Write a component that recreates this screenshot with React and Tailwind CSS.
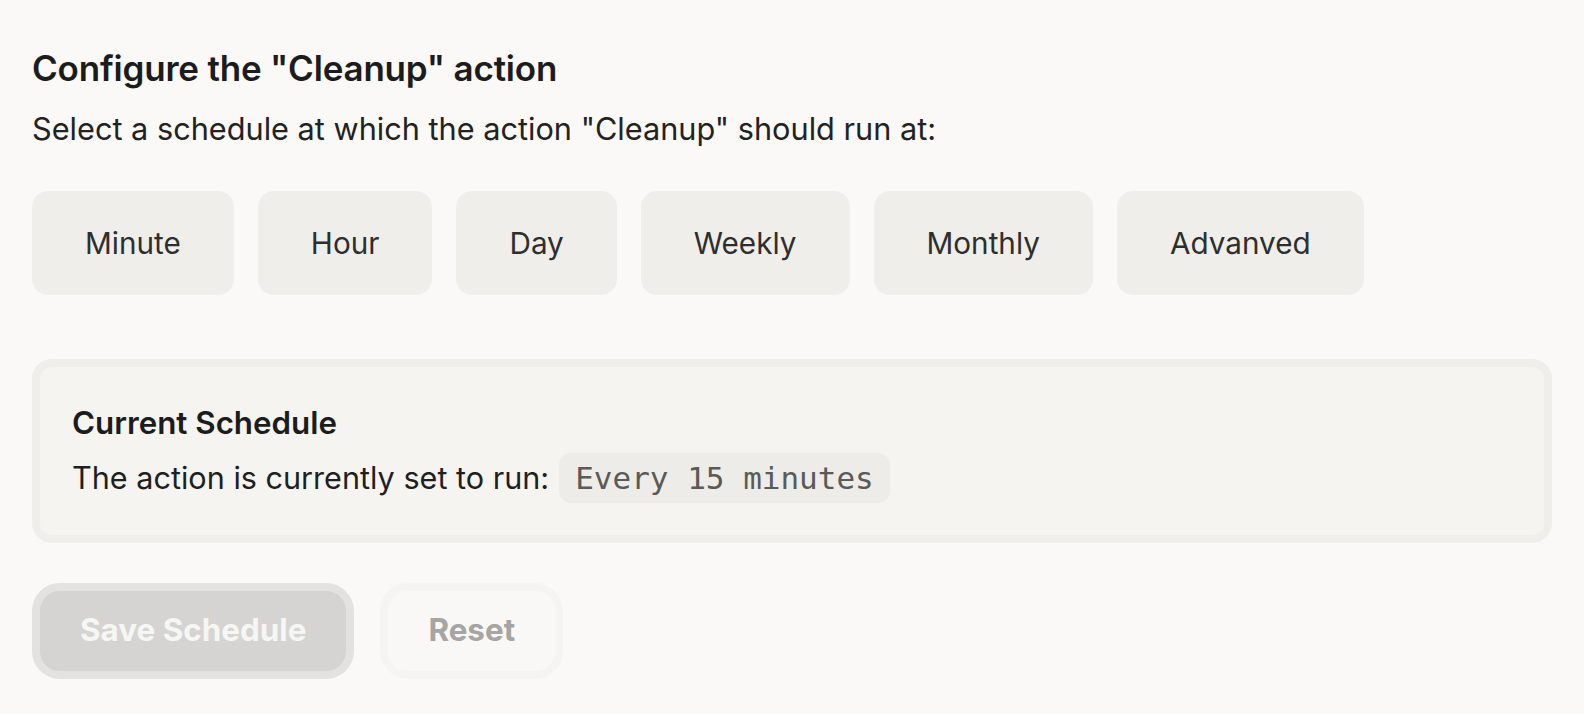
import { useState } from 'react';

const options = ['Minute', 'Hour', 'Day', 'Weekly', 'Monthly', 'Advanved'];

export default function App() {
  const [selected, setSelected] = useState(null);

  return (
    <div className="min-h-screen bg-[#faf9f7] px-8 pt-[44px] pb-8 font-['Inter','Noto_Sans',sans-serif] text-[#1c1c1c]">
      <h2 className="text-[35px] leading-[48px] font-semibold tracking-[-0.2px]">Configure the "Cleanup" action</h2>
      <p className="mt-[14px] text-[30.7px] leading-[46px] text-[#222]">
        Select a schedule at which the action "Cleanup" should run at:
      </p>

      <div className="mt-[39px] flex gap-6">
        {options.map((opt) => (
          <button
            key={opt}
            onClick={() => setSelected(opt)}
            className={`h-[104px] px-[53px] rounded-2xl text-[29.7px] text-[#2e2e2e] ${selected === opt ? 'bg-[#e6e5e1]' : 'bg-[#efeeeb]'}`}
          >
            {opt}
          </button>
        ))}
      </div>

      {/* horario actual */}
      <div className="mt-[64px] rounded-[20px] border-8 border-[#efeeea] bg-[#f5f4f1] px-8 py-8">
        <h3 className="text-[31.3px] leading-[48px] font-semibold text-[#1c1c1c]">Current Schedule</h3>
        <div className="mt-[6px] flex items-center gap-[10px] text-[30.6px] text-[#1f1f1f]">
          <span>The action is currently set to run:</span>
          <code className="h-[50px] px-4 flex items-center rounded-xl bg-[#edece8] font-['DejaVu_Sans_Mono',monospace] text-[31px] text-[#5a5a58]">
            Every 15 minutes
          </code>
        </div>
      </div>

      <div className="mt-[40px] flex gap-[26px]">
        <button disabled className="h-[96px] px-10 rounded-[28px] border-8 border-[#e3e2e0] bg-[#d5d4d2] text-[31.4px] font-bold text-[#f6f6f4]">
          Save Schedule
        </button>
        <button disabled className="h-[96px] px-10 rounded-[28px] border-8 border-[#f5f4f2] bg-[#f9f8f6] text-[31.4px] font-bold text-[#a5a5a3]">
          Reset
        </button>
      </div>
    </div>
  );
}
